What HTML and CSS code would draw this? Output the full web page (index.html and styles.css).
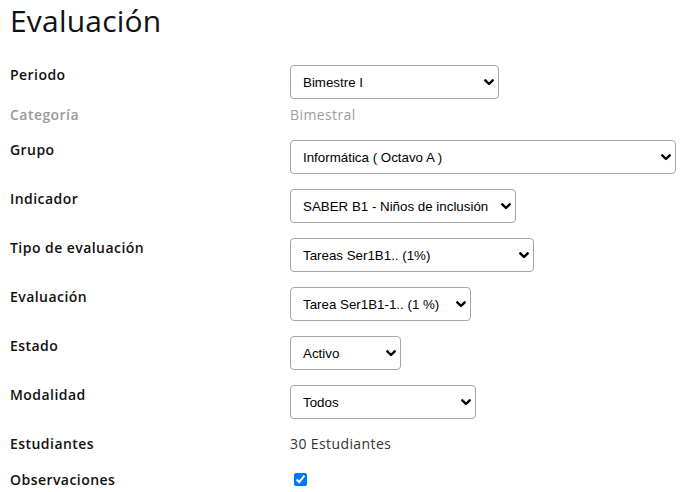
FILE: index.html
```html
<!DOCTYPE html>
<html lang="es">
<head>
<meta charset="utf-8">
<title>Evaluación</title>
<link rel="stylesheet" href="styles.css">
</head>
<body>
<div class="page">
  <h1 class="title">Evaluación</h1>
  <div class="form">
    <div class="row row-tight">
      <div class="label">Periodo</div>
      <div class="field"><span class="sel w-periodo"><select><option>Bimestre I</option></select><svg class="chev" viewBox="0 0 10 7" width="10" height="7"><polyline points="1.3,1.3 5,5 8.7,1.3"/></svg></span></div>
    </div>
    <div class="row">
      <div class="label text muted">Categoría</div>
      <div class="field text muted-light">Bimestral</div>
    </div>
    <div class="row">
      <div class="label">Grupo</div>
      <div class="field"><span class="sel w-grupo"><select><option>Informática ( Octavo A )</option></select><svg class="chev" viewBox="0 0 10 7" width="10" height="7"><polyline points="1.3,1.3 5,5 8.7,1.3"/></svg></span></div>
    </div>
    <div class="row">
      <div class="label">Indicador</div>
      <div class="field"><span class="sel w-indicador"><select><option>SABER B1 - Niños de inclusión</option></select><svg class="chev" viewBox="0 0 10 7" width="10" height="7"><polyline points="1.3,1.3 5,5 8.7,1.3"/></svg></span></div>
    </div>
    <div class="row">
      <div class="label">Tipo de evaluación</div>
      <div class="field"><span class="sel w-tipo"><select><option>Tareas Ser1B1.. (1%)</option></select><svg class="chev" viewBox="0 0 10 7" width="10" height="7"><polyline points="1.3,1.3 5,5 8.7,1.3"/></svg></span></div>
    </div>
    <div class="row">
      <div class="label">Evaluación</div>
      <div class="field"><span class="sel w-eval"><select><option>Tarea Ser1B1-1.. (1 %)</option></select><svg class="chev" viewBox="0 0 10 7" width="10" height="7"><polyline points="1.3,1.3 5,5 8.7,1.3"/></svg></span></div>
    </div>
    <div class="row">
      <div class="label">Estado</div>
      <div class="field"><span class="sel w-estado"><select><option>Activo</option></select><svg class="chev" viewBox="0 0 10 7" width="10" height="7"><polyline points="1.3,1.3 5,5 8.7,1.3"/></svg></span></div>
    </div>
    <div class="row">
      <div class="label">Modalidad</div>
      <div class="field"><span class="sel w-modalidad"><select><option>Todos</option></select><svg class="chev" viewBox="0 0 10 7" width="10" height="7"><polyline points="1.3,1.3 5,5 8.7,1.3"/></svg></span></div>
    </div>
    <div class="row">
      <div class="label text tight">Estudiantes</div>
      <div class="field text tight dark">30 Estudiantes</div>
    </div>
    <div class="row">
      <div class="label text">Observaciones</div>
      <div class="field"><input type="checkbox" class="check" checked></div>
    </div>
  </div>
</div>
</body>
</html>
```

FILE: styles.css
```css
html, body {
  margin: 0;
  padding: 0;
  background: #fff;
}
body {
  font-family: "Open Sans", "Noto Sans", sans-serif;
  color: #000;
}
.page {
  padding: 0 10px;
}
.title {
  font-size: 30px;
  font-weight: 400;
  line-height: 36px;
  margin: 3px 0 26px 0;
  color: #111;
  letter-spacing: 0.2px;
}
.row {
  display: flex;
  align-items: flex-start;
  margin-bottom: 15px;
}
.row-tight {
  margin-bottom: 5px;
}
.label {
  width: 280px;
  flex: 0 0 280px;
  font-size: 14px;
  font-weight: 600;
  line-height: 20px;
  letter-spacing: 0.45px;
  color: #111;
}
.label.text {
  line-height: 21px;
}
.label.muted {
  color: #9a9a9a;
}
.field {
  flex: 1 1 auto;
}
.field.text {
  font-size: 14px;
  line-height: 21px;
  letter-spacing: 0.4px;
}
.label.tight,
.field.tight {
  line-height: 20px;
}
.muted-light {
  color: #9d9d9d;
}
.dark {
  color: #333;
}
.sel {
  position: relative;
  display: inline-block;
  vertical-align: top;
}
.sel select {
  appearance: none;
  -webkit-appearance: none;
  display: block;
  width: 100%;
  height: 34px;
  box-sizing: border-box;
  border: 1px solid #a6a6a6;
  border-radius: 4px;
  background: #fff;
  font-family: "Liberation Sans", Arial, sans-serif;
  font-size: 13.33px;
  color: #000;
  padding: 0 24px 0 12px;
  margin: 0;
}
.chev {
  position: absolute;
  right: 5px;
  top: 14px;
  fill: none;
  stroke: #000;
  stroke-width: 2.4;
  stroke-linecap: round;
  stroke-linejoin: round;
}
.w-periodo { width: 209px; }
.w-grupo { width: 386px; }
.w-indicador { width: 226px; }
.w-tipo { width: 244px; }
.w-eval { width: 181px; }
.w-estado { width: 111px; }
.w-modalidad { width: 186px; }
.check {
  width: 13px;
  height: 13px;
  margin: 3px 3px 3px 4px;
  accent-color: #0075ff;
}
```
